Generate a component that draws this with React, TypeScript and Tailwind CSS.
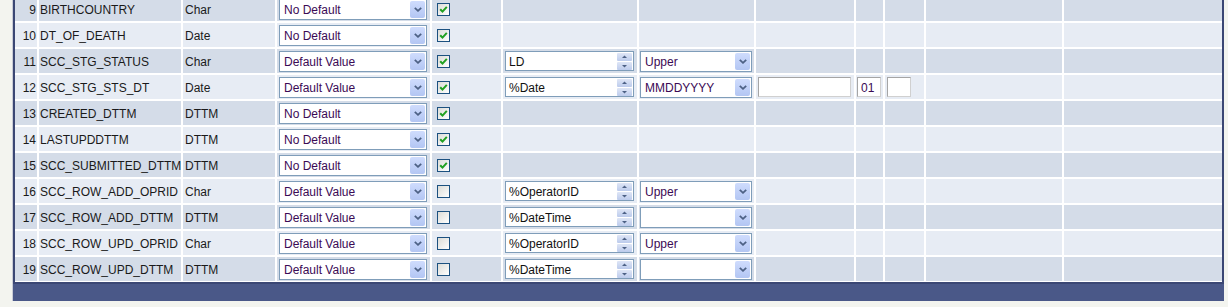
import React from "react";

interface Row {
  num: number;
  field: string;
  type: string;
  defType: string;
  req: boolean;
  value?: string;
  format?: string;
  extra?: boolean;
}

const rows: Row[] = [
  { num: 9, field: "BIRTHCOUNTRY", type: "Char", defType: "No Default", req: true },
  { num: 10, field: "DT_OF_DEATH", type: "Date", defType: "No Default", req: true },
  { num: 11, field: "SCC_STG_STATUS", type: "Char", defType: "Default Value", req: true, value: "LD", format: "Upper" },
  { num: 12, field: "SCC_STG_STS_DT", type: "Date", defType: "Default Value", req: true, value: "%Date", format: "MMDDYYYY", extra: true },
  { num: 13, field: "CREATED_DTTM", type: "DTTM", defType: "No Default", req: true },
  { num: 14, field: "LASTUPDDTTM", type: "DTTM", defType: "No Default", req: true },
  { num: 15, field: "SCC_SUBMITTED_DTTM", type: "DTTM", defType: "No Default", req: true },
  { num: 16, field: "SCC_ROW_ADD_OPRID", type: "Char", defType: "Default Value", req: false, value: "%OperatorID", format: "Upper" },
  { num: 17, field: "SCC_ROW_ADD_DTTM", type: "DTTM", defType: "Default Value", req: false, value: "%DateTime", format: "" },
  { num: 18, field: "SCC_ROW_UPD_OPRID", type: "Char", defType: "Default Value", req: false, value: "%OperatorID", format: "Upper" },
  { num: 19, field: "SCC_ROW_UPD_DTTM", type: "DTTM", defType: "Default Value", req: false, value: "%DateTime", format: "" },
];

const ArrowButton = () => (
  <div className="w-[15px] h-[17px] mr-px rounded-[2px] bg-gradient-to-b from-[#cfdcfd] to-[#b3c6f3] flex items-center justify-center shrink-0">
    <svg width="8" height="5" viewBox="0 0 8 5">
      <path d="M0.8 0.8 L4 3.8 L7.2 0.8" stroke="#4d6185" strokeWidth="1.8" fill="none" />
    </svg>
  </div>
);

const Select = ({ text, width }: { text: string; width: string }) => (
  <div className={`${width} h-[21px] border border-[#7f9db9] bg-white flex items-center justify-between`}>
    <span className="pl-[4px] pt-px text-[#3b0a55] whitespace-nowrap">{text}</span>
    <ArrowButton />
  </div>
);

const Spinner = ({ text }: { text: string }) => (
  <div className="w-[129px] h-[20px] border border-[#7f9db9] bg-white flex items-center justify-between">
    <span className="pl-[3px] pt-px text-[#111] whitespace-nowrap">{text}</span>
    <div className="flex flex-col gap-px mr-px">
      <div className="w-[15px] h-[8px] rounded-[1px] bg-gradient-to-b from-[#dfe6f6] to-[#bccbec] flex items-center justify-center">
        <svg width="7" height="4" viewBox="0 0 7 4">
          <path d="M1 3 L3.5 0.5 L6 3 Z" fill="#4d6185" />
        </svg>
      </div>
      <div className="w-[15px] h-[8px] rounded-[1px] bg-gradient-to-b from-[#dfe6f6] to-[#bccbec] flex items-center justify-center">
        <svg width="7" height="4" viewBox="0 0 7 4">
          <path d="M1 1 L3.5 3.5 L6 1 Z" fill="#4d6185" />
        </svg>
      </div>
    </div>
  </div>
);

const TextBox = ({ text, width }: { text?: string; width: string }) => (
  <div className={`${width} h-[20px] border border-t-[#a5a5a5] border-l-[#a5a5a5] border-r-[#d0d0d0] border-b-[#d0d0d0] bg-white flex items-center`}>
    <span className="pl-[3px] pt-px text-[#3b0a55]">{text}</span>
  </div>
);

const Checkbox = ({ checked }: { checked: boolean }) => (
  <div className="w-[13px] h-[13px] border border-[#1c5180] bg-gradient-to-br from-[#dcdcd7] to-white flex items-center justify-center">
    {checked && (
      <svg width="9" height="9" viewBox="0 0 9 9">
        <path d="M1.2 4.2 L3.5 6.6 L7.8 1.8" stroke="#21a121" strokeWidth="2" fill="none" />
      </svg>
    )}
  </div>
);

const DefaultRow = ({ row }: { row: Row }) => {
  const bg = row.num % 2 === 1 ? "bg-[#d4dce8]" : "bg-[#e7ecf4]";
  const cell = `${bg} h-[24px] flex items-center shrink-0`;
  return (
    <div className="flex gap-[2px]">
      <div className={`${cell} w-[22px] justify-end pr-px pt-px`}>{row.num}</div>
      <div className={`${cell} w-[142px] pl-px pt-px`}>{row.field}</div>
      <div className={`${cell} w-[92px] pl-[2px] pt-px`}>{row.type}</div>
      <div className={`${cell} w-[153px] pl-[2px]`}>
        <Select text={row.defType} width="w-[148px]" />
      </div>
      <div className={`${cell} w-[69px] pl-[5px]`}>
        <Checkbox checked={row.req} />
      </div>
      <div className={`${cell} w-[134px] pl-[2px]`}>
        {row.value !== undefined && <Spinner text={row.value} />}
      </div>
      <div className={`${cell} w-[115px] pl-px`}>
        {row.format !== undefined && <Select text={row.format} width="w-[112px]" />}
      </div>
      <div className={`${cell} w-[98px] pl-[2px]`}>
        {row.extra && <TextBox width="w-[93px]" />}
      </div>
      <div className={`${cell} w-[27px] pl-px`}>
        {row.extra && <TextBox text="01" width="w-[24px]" />}
      </div>
      <div className={`${cell} w-[39px] pl-[2px]`}>
        {row.extra && <TextBox width="w-[24px]" />}
      </div>
      <div className={`${cell} w-[136px]`} />
      <div className={`${cell} w-[158px]`} />
    </div>
  );
};

export default function App() {
  return (
    <div className="w-[1228px] h-[307px] overflow-hidden bg-[#f3f4ef] text-[12px] text-[#1a1a1a] font-['Liberation_Sans',Arial,sans-serif]">
      <div className="ml-[12px] w-[1212px] border-l border-[#c9ccd6] -mt-[3px]">
        <div className="border-l-2 border-r-2 border-b-2 border-[#3b4774] bg-white flex flex-col gap-[2px] pb-px">
          {rows.map((r) => (
            <DefaultRow key={r.num} row={r} />
          ))}
        </div>
        <div className="h-[17px] bg-[#4a5888]" />
      </div>
    </div>
  );
}
